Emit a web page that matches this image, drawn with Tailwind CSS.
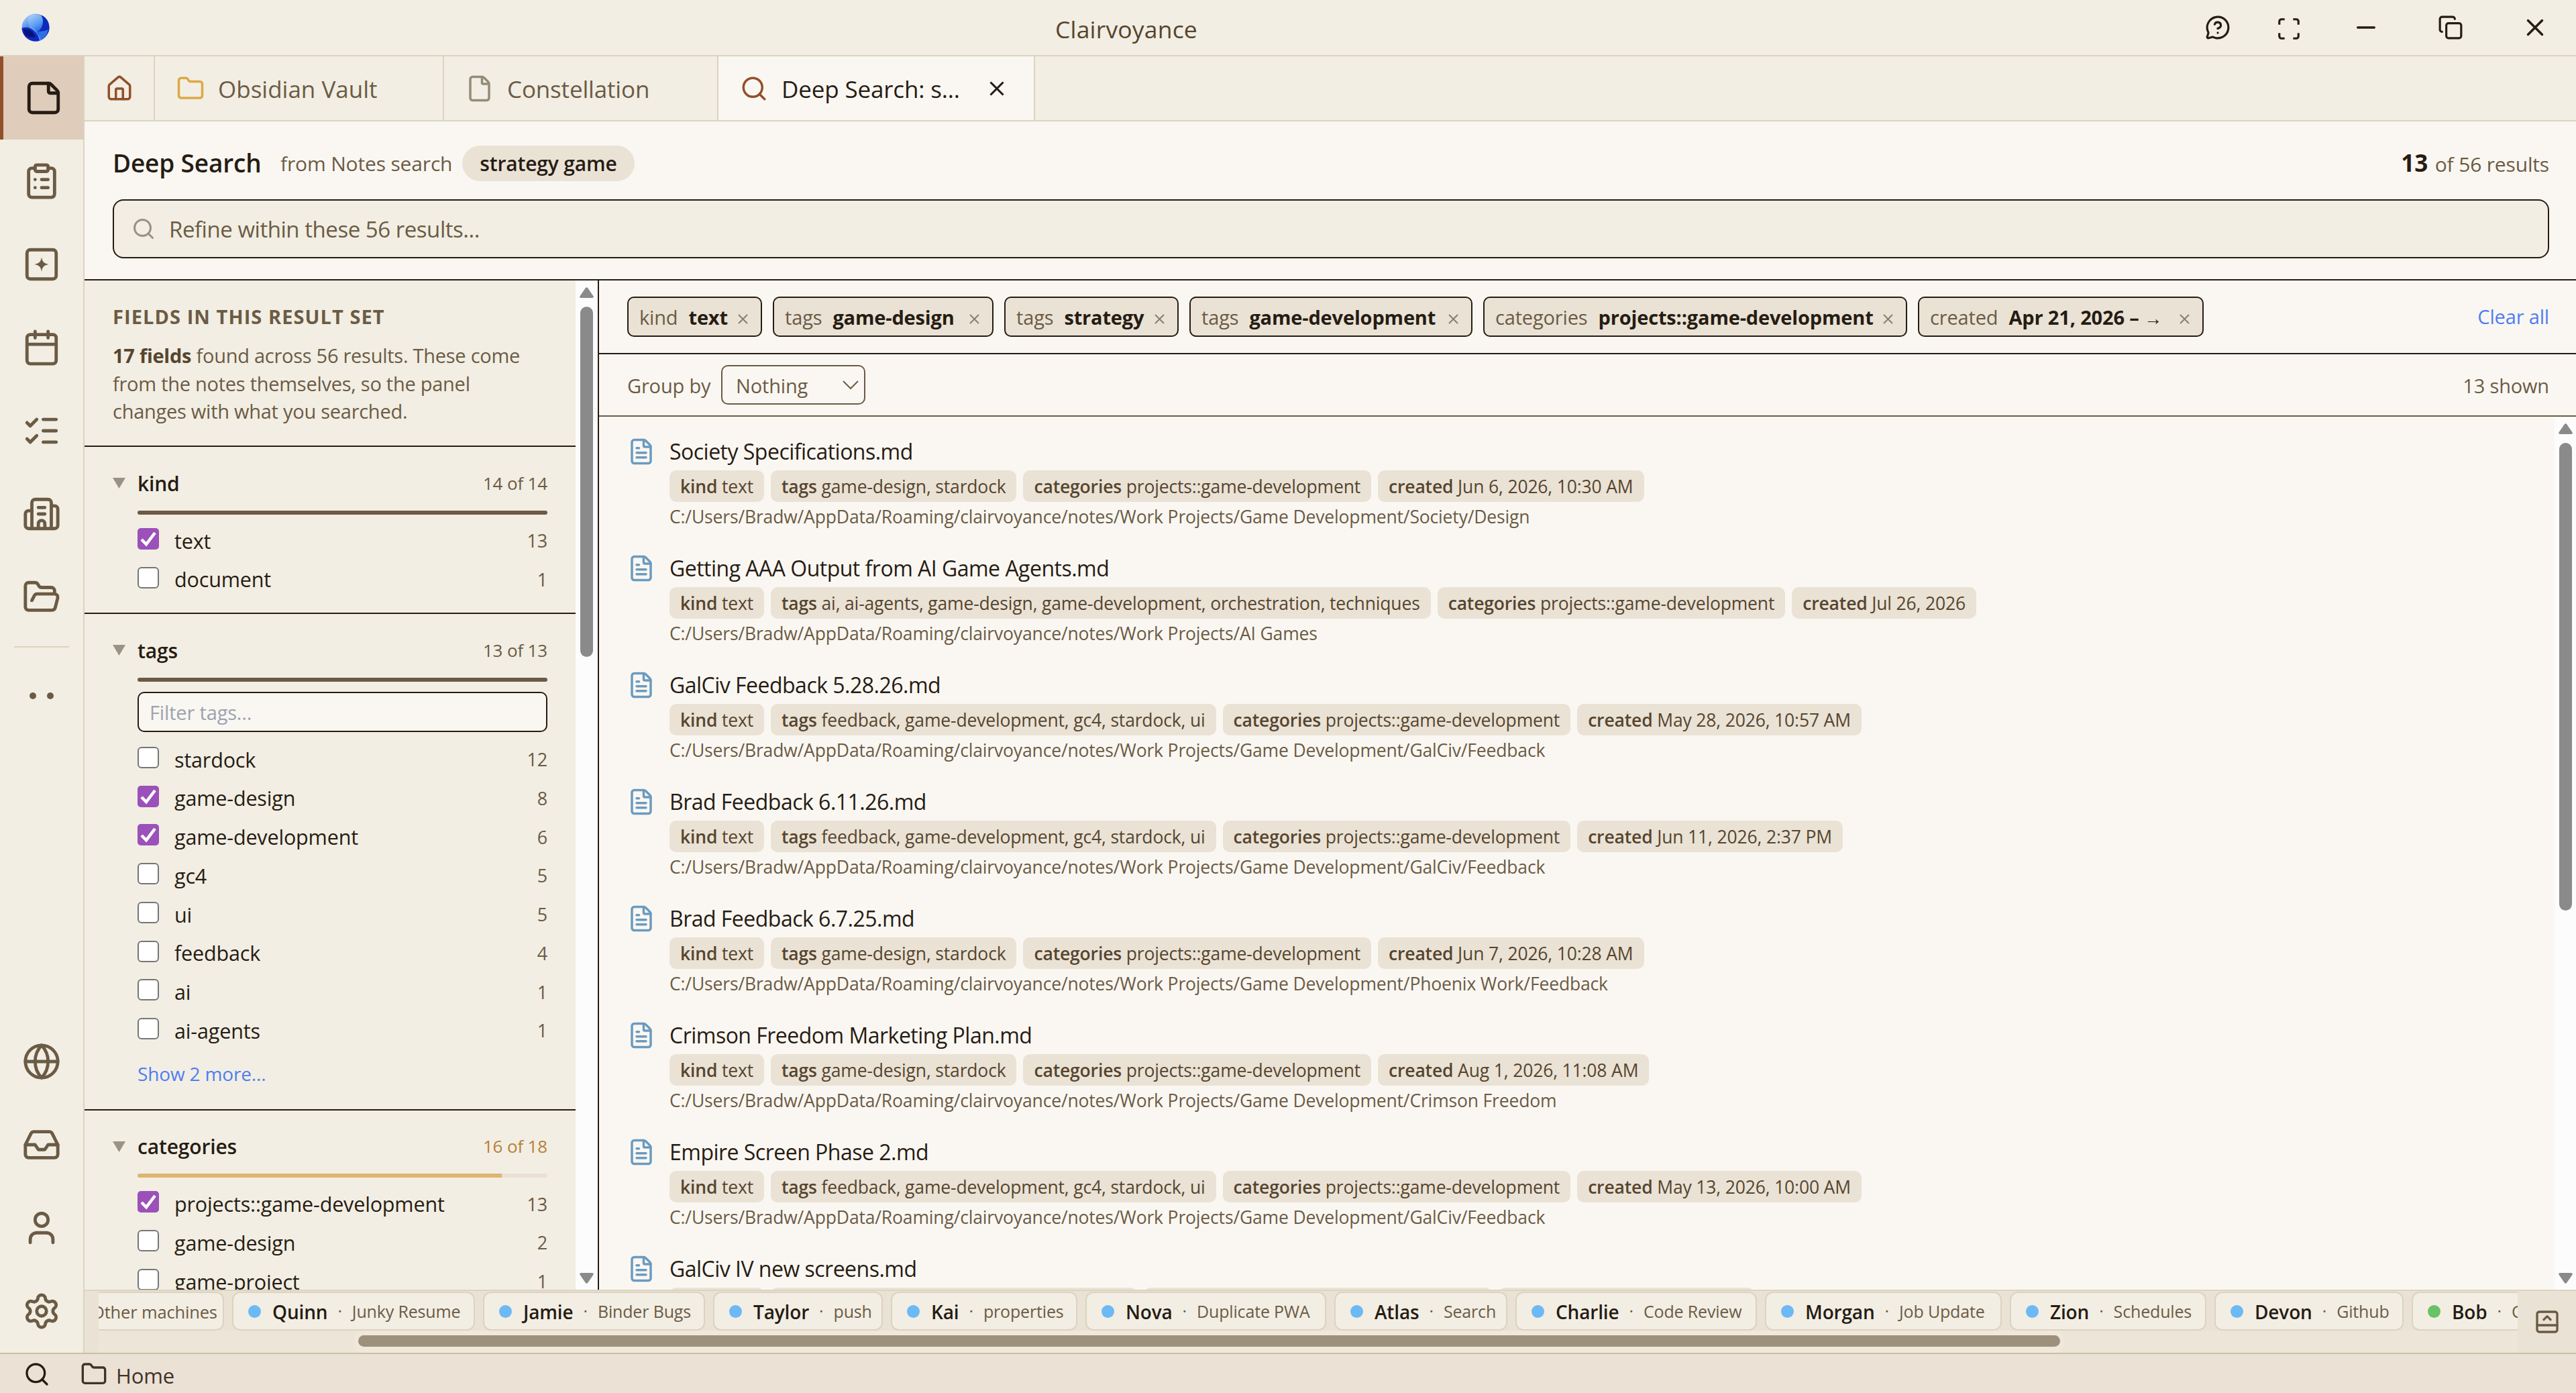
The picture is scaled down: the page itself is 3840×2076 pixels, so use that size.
<!DOCTYPE html>
<html lang="en">
<head>
    <meta charset="UTF-8">
    <meta name="viewport" content="width=device-width, initial-scale=1.0">
    <title>Clairvoyance</title>
    <script src="https://cdn.jsdelivr.net/npm/@tailwindcss/browser@4"></script>
</head>
<body class="w-[3840px] h-[2076px] overflow-hidden flex flex-col bg-[#faf7f2] text-[#261c14] font-['Open_Sans','Noto_Sans',sans-serif] tracking-[-0.01em]">

    <!-- Icon sprite -->
    <svg class="hidden">
        <symbol id="i-note" viewBox="0 0 24 24"><path d="M21 9a2.4 2.4 0 0 0-.706-1.706l-3.588-3.588A2.4 2.4 0 0 0 15 3H5a2 2 0 0 0-2 2v14a2 2 0 0 0 2 2h14a2 2 0 0 0 2-2z"/><path d="M15 3v5a1 1 0 0 0 1 1h5"/></symbol>
        <symbol id="i-clipboard" viewBox="0 0 24 24"><rect width="8" height="4" x="8" y="2" rx="1"/><path d="M16 4h2a2 2 0 0 1 2 2v14a2 2 0 0 1-2 2H6a2 2 0 0 1-2-2V6a2 2 0 0 1 2-2h2"/><path d="M12 11h4M12 16h4M8 11h.01M8 16h.01"/></symbol>
        <symbol id="i-sparkle" viewBox="0 0 24 24"><rect x="3" y="3" width="18" height="18" rx="2"/><path fill="currentColor" stroke="none" d="M12 7.600c.5 2.900 1.500 3.900 4.400 4.400-2.900.5-3.900 1.500-4.400 4.400-.5-2.900-1.500-3.900-4.400-4.400 2.900-.5 3.900-1.500 4.400-4.400z"/></symbol>
        <symbol id="i-calendar" viewBox="0 0 24 24"><path d="M8 2v4M16 2v4M3 10h18"/><rect width="18" height="18" x="3" y="4" rx="2"/></symbol>
        <symbol id="i-checks" viewBox="0 0 24 24"><path d="M13 5h8M13 12h8M13 19h8M3 17l2 2 4-4M3 7l2 2 4-4"/></symbol>
        <symbol id="i-building" viewBox="0 0 24 24"><path d="M10 12h4M10 8h4M14 21v-3a2 2 0 0 0-4 0v3"/><path d="M6 10H4a2 2 0 0 0-2 2v7a2 2 0 0 0 2 2h16a2 2 0 0 0 2-2V9a2 2 0 0 0-2-2h-2"/><path d="M6 21V5a2 2 0 0 1 2-2h8a2 2 0 0 1 2 2v16"/></symbol>
        <symbol id="i-folder-open" viewBox="0 0 24 24"><path d="m6 14 1.500-2.900A2 2 0 0 1 9.240 10H20a2 2 0 0 1 1.940 2.500l-1.540 6a2 2 0 0 1-1.950 1.500H4a2 2 0 0 1-2-2V5a2 2 0 0 1 2-2h3.900a2 2 0 0 1 1.690.9l.81 1.200a2 2 0 0 0 1.670.9H18a2 2 0 0 1 2 2v2"/></symbol>
        <symbol id="i-globe" viewBox="0 0 24 24"><circle cx="12" cy="12" r="10"/><path d="M12 2a14.500 14.500 0 0 0 0 20 14.500 14.500 0 0 0 0-20M2 12h20"/></symbol>
        <symbol id="i-inbox" viewBox="0 0 24 24"><path d="M22 12h-6l-2 3h-4l-2-3H2"/><path d="M5.450 5.110 2 12v6a2 2 0 0 0 2 2h16a2 2 0 0 0 2-2v-6l-3.450-6.890A2 2 0 0 0 16.760 4H7.240a2 2 0 0 0-1.790 1.110z"/></symbol>
        <symbol id="i-user" viewBox="0 0 24 24"><path d="M19 21v-2a4 4 0 0 0-4-4H9a4 4 0 0 0-4 4v2"/><circle cx="12" cy="7" r="4"/></symbol>
        <symbol id="i-settings" viewBox="0 0 24 24"><path d="M9.671 4.136a2.340 2.340 0 0 1 4.659 0 2.340 2.340 0 0 0 3.319 1.915 2.340 2.340 0 0 1 2.330 4.033 2.340 2.340 0 0 0 0 3.831 2.340 2.340 0 0 1-2.330 4.033 2.340 2.340 0 0 0-3.319 1.915 2.340 2.340 0 0 1-4.659 0 2.340 2.340 0 0 0-3.320-1.915 2.340 2.340 0 0 1-2.330-4.033 2.340 2.340 0 0 0 0-3.831A2.340 2.340 0 0 1 6.350 6.051a2.340 2.340 0 0 0 3.319-1.915"/><circle cx="12" cy="12" r="3"/></symbol>
        <symbol id="i-home" viewBox="0 0 24 24"><path d="M15 21v-8a1 1 0 0 0-1-1h-4a1 1 0 0 0-1 1v8"/><path d="M3 10a2 2 0 0 1 .709-1.528l7-6a2 2 0 0 1 2.582 0l7 6A2 2 0 0 1 21 10v9a2 2 0 0 1-2 2H5a2 2 0 0 1-2-2z"/></symbol>
        <symbol id="i-folder" viewBox="0 0 24 24"><path d="M20 20a2 2 0 0 0 2-2V8a2 2 0 0 0-2-2h-7.900a2 2 0 0 1-1.690-.9L9.600 3.900A2 2 0 0 0 7.930 3H4a2 2 0 0 0-2 2v13a2 2 0 0 0 2 2Z"/></symbol>
        <symbol id="i-file" viewBox="0 0 24 24"><path d="M6 22a2 2 0 0 1-2-2V4a2 2 0 0 1 2-2h8a2.400 2.400 0 0 1 1.704.706l3.588 3.588A2.400 2.400 0 0 1 20 8v12a2 2 0 0 1-2 2z"/><path d="M14 2v5a1 1 0 0 0 1 1h5"/></symbol>
        <symbol id="i-file-text" viewBox="0 0 24 24"><path d="M6 22a2 2 0 0 1-2-2V4a2 2 0 0 1 2-2h8a2.400 2.400 0 0 1 1.704.706l3.588 3.588A2.400 2.400 0 0 1 20 8v12a2 2 0 0 1-2 2z"/><path d="M14 2v5a1 1 0 0 0 1 1h5M10 9H8M16 13H8M16 17H8"/></symbol>
        <symbol id="i-search" viewBox="0 0 24 24"><path d="m21 21-4.340-4.340"/><circle cx="11" cy="11" r="8"/></symbol>
        <symbol id="i-x" viewBox="0 0 24 24"><path d="M18 6 6 18M6 6l12 12"/></symbol>
        <symbol id="i-help" viewBox="0 0 24 24"><path d="M2.992 16.342a2 2 0 0 1 .094 1.167l-1.065 3.290a1 1 0 0 0 1.236 1.168l3.413-.998a2 2 0 0 1 1.099.092 10 10 0 1 0-4.777-4.719"/><path d="M9.090 9a3 3 0 0 1 5.830 1c0 2-3 3-3 3M12 17h.01"/></symbol>
        <symbol id="i-maximize" viewBox="0 0 24 24"><path d="M8 3H5a2 2 0 0 0-2 2v3M21 8V5a2 2 0 0 0-2-2h-3M3 16v3a2 2 0 0 0 2 2h3M16 21h3a2 2 0 0 0 2-2v-3"/></symbol>
        <symbol id="i-minus" viewBox="0 0 24 24"><path d="M5 12h14"/></symbol>
        <symbol id="i-copy" viewBox="0 0 24 24"><rect width="14" height="14" x="8" y="8" rx="2"/><path d="M4 16c-1.100 0-2-.9-2-2V4c0-1.100.9-2 2-2h10c1.100 0 2 .9 2 2"/></symbol>
        <symbol id="i-panel" viewBox="0 0 24 24"><rect width="18" height="18" x="3" y="3" rx="2"/><path d="M3 15h18M9 10l3-3 3 3"/></symbol>
        <symbol id="i-up" viewBox="0 0 21 16"><path fill="currentColor" stroke="none" d="M8.800 1.200q1.700-2 3.400 0l8.300 12q1 2.600-1.500 2.800H2q-2.500-.2-1.500-2.800z"/></symbol>
        <symbol id="i-down" viewBox="0 0 21 16"><path fill="currentColor" stroke="none" d="M8.800 14.800q1.700 2 3.400 0l8.300-12q1-2.600-1.500-2.800H2q-2.500.2-1.500 2.800z"/></symbol>
        <symbol id="i-tri" viewBox="0 0 19 16"><path fill="currentColor" stroke="none" d="M0 0h19l-9.500 16z"/></symbol>
    </svg>

    <!-- Title bar -->
    <header class="h-[84px] shrink-0 flex items-center bg-[#f2eee3] border-b-2 border-[#dcd3c0] relative">
        <svg class="size-[42px] ml-8" viewBox="0 0 42 42">
            <defs>
                <linearGradient id="orb" x1="0.1" y1="0" x2="0.8" y2="1"><stop offset="0" stop-color="#c4def8"/><stop offset="0.35" stop-color="#5a93e8"/><stop offset="0.7" stop-color="#1540c8"/><stop offset="1" stop-color="#1d4fd8"/></linearGradient>
                <linearGradient id="drop" x1="0.2" y1="0" x2="0.7" y2="1"><stop offset="0" stop-color="#a9cdf6"/><stop offset="0.6" stop-color="#5c9df2"/><stop offset="1" stop-color="#2b66e0"/></linearGradient>
                <clipPath id="ball"><circle cx="21" cy="21" r="20.500"/></clipPath>
            </defs>
            <g clip-path="url(#ball)">
                <rect width="42" height="42" fill="url(#orb)"/>
                <path d="M30 2q12 6 12 20T26 27q8-12 4-25z" fill="#0b2cba"/>
                <path d="M0 22q12-4 20 6t6 16H4Q0 34 0 22z" fill="#0f28c0"/>
                <path d="M3 24q9-2 15 6l3 5q-10 2-16-3z" fill="#050a5c" opacity=".7"/>
                <path d="M14 2q18-2 18 9t-8 16q-14-4-14-15 0-7 4-10z" fill="url(#drop)"/>
                <path d="M24 27q10 0 16-3-3 13-13 17 1-8-3-14z" fill="#2c6fe6"/>
                <path d="M12 20q13 6 16 20" stroke="#6db4ff" stroke-width="1.500" fill="none" opacity=".7"/>
            </g>
        </svg>
        <div class="absolute inset-x-0 text-center pr-[482px] text-[35.5px] font-medium tracking-[0.005em] text-[#56452f] leading-[86px] top-0">Clairvoyance</div>
        <div class="absolute right-0 top-0 h-[82px] w-[600px] text-[#261c14]">
            <svg class="absolute left-[47px] top-[22px] size-[38px] fill-none stroke-current stroke-2 [stroke-linecap:round] [stroke-linejoin:round]"><use href="#i-help"/></svg>
            <svg class="absolute left-[153px] top-[24px] size-[38px] fill-none stroke-current stroke-2 [stroke-linejoin:round]"><use href="#i-maximize"/></svg>
            <svg class="absolute left-[266px] top-[20px] size-[42px] fill-none stroke-current stroke-2 [stroke-linecap:round]"><use href="#i-minus"/></svg>
            <svg class="absolute left-[394px] top-[22px] size-[38px] fill-none stroke-current stroke-2 [stroke-linecap:round] [stroke-linejoin:round]"><use href="#i-copy"/></svg>
            <svg class="absolute left-[518px] top-[20px] size-[42px] fill-none stroke-current stroke-2 [stroke-linecap:round]"><use href="#i-x"/></svg>
        </div>
    </header>

    <div class="flex flex-1 min-h-0">
        <!-- Activity rail -->
        <nav class="w-[126px] shrink-0 border-r-2 border-[#dcd3c0] bg-[#f2eee3] flex flex-col items-center text-[#6b5b45]">
            <div class="w-full h-[124px] border-l-[5px] border-[#91502a] bg-[#dfccbb] text-[#261c14] flex items-center justify-center shrink-0"><svg class="size-[58px] fill-none stroke-current stroke-2 [stroke-linecap:round] [stroke-linejoin:round]"><use href="#i-note"/></svg></div>
            <div class="h-[124px] flex items-center shrink-0"><svg class="size-[58px] fill-none stroke-current stroke-2 [stroke-linecap:round] [stroke-linejoin:round]"><use href="#i-clipboard"/></svg></div>
            <div class="h-[124px] flex items-center shrink-0"><svg class="size-[58px] fill-none stroke-current stroke-2 [stroke-linecap:round] [stroke-linejoin:round]"><use href="#i-sparkle"/></svg></div>
            <div class="h-[124px] flex items-center shrink-0"><svg class="size-[58px] fill-none stroke-current stroke-2 [stroke-linecap:round] [stroke-linejoin:round]"><use href="#i-calendar"/></svg></div>
            <div class="h-[124px] flex items-center shrink-0"><svg class="size-[58px] fill-none stroke-current stroke-2 [stroke-linecap:round] [stroke-linejoin:round]"><use href="#i-checks"/></svg></div>
            <div class="h-[124px] flex items-center shrink-0"><svg class="size-[58px] fill-none stroke-current stroke-2 [stroke-linecap:round] [stroke-linejoin:round]"><use href="#i-building"/></svg></div>
            <div class="h-[124px] flex items-center shrink-0"><svg class="size-[58px] fill-none stroke-current stroke-2 [stroke-linecap:round] [stroke-linejoin:round]"><use href="#i-folder-open"/></svg></div>
            <div class="w-[82px] h-0.5 mt-[11px] bg-[#dcd3c0] shrink-0"></div>
            <div class="mt-[67px] flex gap-4 shrink-0"><i class="size-2.5 rounded-full bg-current"></i><i class="size-2.5 rounded-full bg-current"></i></div>
            <div class="mt-auto h-[124px] flex items-center shrink-0"><svg class="size-[58px] fill-none stroke-current stroke-2 [stroke-linecap:round] [stroke-linejoin:round]"><use href="#i-globe"/></svg></div>
            <div class="h-[124px] flex items-center shrink-0"><svg class="size-[58px] fill-none stroke-current stroke-2 [stroke-linecap:round] [stroke-linejoin:round]"><use href="#i-inbox"/></svg></div>
            <div class="h-[124px] flex items-center shrink-0"><svg class="size-[58px] fill-none stroke-current stroke-2 [stroke-linecap:round] [stroke-linejoin:round]"><use href="#i-user"/></svg></div>
            <div class="h-[124px] flex items-center shrink-0"><svg class="size-[58px] fill-none stroke-current stroke-2 [stroke-linecap:round] [stroke-linejoin:round]"><use href="#i-settings"/></svg></div>
        </nav>

        <main class="flex-1 min-w-0 flex flex-col">
            <!-- Tabs -->
            <div class="h-[97px] shrink-0 flex bg-[#f2eee3] border-b-2 border-[#dcd3c0] text-[35px] text-[#6b5b45] whitespace-nowrap">
                <div class="w-[105px] border-r-2 border-[#dcd3c0] flex items-center justify-center text-[#91502a]"><svg class="size-[42px] fill-none stroke-current stroke-2 [stroke-linecap:round] [stroke-linejoin:round]"><use href="#i-home"/></svg></div>
                <div class="w-[431px] border-r-2 border-[#dcd3c0] flex items-center pl-8">
                    <svg class="size-[42px] mr-5 text-[#dda944] fill-none stroke-current stroke-2 [stroke-linejoin:round]"><use href="#i-folder"/></svg><span class="mt-[3px] tracking-normal">Obsidian Vault</span>
                </div>
                <div class="w-[409px] border-r-2 border-[#dcd3c0] flex items-center pl-8">
                    <svg class="size-[42px] mr-5 text-[#958b79] fill-none stroke-current stroke-2 [stroke-linejoin:round]"><use href="#i-file"/></svg><span class="mt-[3px]">Constellation</span>
                </div>
                <div class="w-[472px] border-r-2 border-[#dcd3c0] bg-[#faf7f2] text-[#261c14] flex items-center pl-8">
                    <svg class="size-[42px] mr-5 text-[#91502a] fill-none stroke-current stroke-2 [stroke-linecap:round]"><use href="#i-search"/></svg><span class="mt-[3px] w-[264px]">Deep Search: s...</span>
                    <svg class="size-[38px] ml-[38px] fill-none stroke-current stroke-2"><use href="#i-x"/></svg>
                </div>
            </div>

            <!-- Search header -->
            <div class="h-[237px] shrink-0 border-b-2 border-[#261c14] px-[42px] pr-10 pt-[32px]">
                <div class="h-[60px] flex items-center">
                    <span class="text-[37px] font-semibold w-[250px]">Deep Search</span>
                    <span class="text-[30px] text-[#6b5b45] w-[271px]">from Notes search</span>
                    <span class="w-[257px] h-[53px] rounded-full bg-[#eae2d5] text-center text-[30px] leading-[54px] font-semibold">strategy game</span>
                    <span class="ml-auto text-[30px] text-[#6b5b45]"><b class="text-[35px] text-[#261c14] mr-[3px]">13</b> of 56 results</span>
                </div>
                <div class="mt-[24px] h-[88px] border-2 border-[#261c14] rounded-2xl bg-[#f2eee3] flex items-center pl-[26px] text-[33px] tracking-[-0.014em] text-[#6b5b45]">
                    <svg class="size-[36px] mr-[20px] text-[#9a9284] fill-none stroke-current stroke-2 [stroke-linecap:round]"><use href="#i-search"/></svg>
                    <span class="mt-0.5">Refine within these 56 results...</span>
                </div>
            </div>

            <div class="flex-1 min-h-0 flex">
                <!-- Facets -->
                <aside class="w-[767px] shrink-0 border-r-2 border-[#261c14] bg-[#f2eee3] flex">
                    <div class="w-[732px] shrink-0 overflow-hidden">
                        <div class="h-[248px] border-b-2 border-[#261c14] pl-[42px] pt-[34px] text-[29px] text-[#6b5b45]">
                            <div class="font-bold leading-10 tracking-[0.037em]">FIELDS IN THIS RESULT SET</div>
                            <div class="mt-[17px] leading-[41.6px] whitespace-nowrap tracking-[-0.009em]"><b class="text-[#56452f]">17 fields</b> found across 56 results. These come<br>from the notes themselves, so the panel<br>changes with what you searched.</div>
                        </div>
                        <div id="facets"></div>
                    </div>
                    <div class="w-[33px] bg-[#fcfcfc] text-[#8a8a8a] flex flex-col items-center pt-[10px] pb-[9px]">
                        <svg class="w-[21px] h-4"><use href="#i-up"/></svg>
                        <div class="w-[19px] h-[522px] mt-[13px] rounded-full bg-[#8a8a8a]"></div>
                        <svg class="w-[21px] h-4 mt-auto"><use href="#i-down"/></svg>
                    </div>
                </aside>

                <!-- Results -->
                <section class="flex-1 min-w-0 flex flex-col">
                    <div class="h-[110px] shrink-0 border-b-2 border-[#261c14] flex items-center pl-[42px] pr-10">
                        <div id="filters" class="flex gap-4"></div>
                        <span class="ml-auto text-[29px] text-[#4f7df3]">Clear all</span>
                    </div>
                    <div class="h-[93px] shrink-0 border-b-2 border-[#6b5b45] flex items-center pl-[42px] pr-10 text-[29px] text-[#6b5b45]">
                        <span class="w-[140px] mt-0.5">Group by</span>
                        <div class="w-[215px] h-[59px] border-2 border-[#6b5b45] rounded-[10px] flex items-center pl-5 pr-2 justify-between"><span class="mt-0.5">Nothing</span>
                            <svg class="w-6 h-[14px] fill-none stroke-current stroke-2" viewBox="0 0 24 14"><path d="M1 1l11 11L23 1"/></svg></div>
                        <span class="ml-auto mt-0.5">13 shown</span>
                    </div>
                    <div class="flex-1 min-h-0 flex">
                        <div id="results" class="flex-1 min-w-0 overflow-hidden pl-[42px] pt-[24px]"></div>
                        <div class="w-[32px] bg-[#fcfcfc] text-[#8a8a8a] flex flex-col items-center pt-[10px] pb-[9px]">
                            <svg class="w-[21px] h-4"><use href="#i-up"/></svg>
                            <div class="w-[19px] h-[697px] mt-[13px] rounded-full bg-[#8a8a8a]"></div>
                            <svg class="w-[21px] h-4 mt-auto"><use href="#i-down"/></svg>
                        </div>
                    </div>
                </section>
            </div>

            <!-- Agent strip -->
            <div class="h-[94px] shrink-0 border-t-2 border-[#dcd3c0] bg-[#eae2d5] flex">
                <div class="ml-[21px] w-[3606px] overflow-hidden">
                    <div id="agents" class="flex gap-3 pt-px w-max ml-[-40px]"></div>
                    <div class="h-[33px] bg-[#ede5d8] flex items-start pl-[380px]">
                        <div class="w-[2551px] h-[33px] rounded-2xl bg-[#f0e8da] px-[7px] pt-[7px]"><div class="h-[17px] rounded-full bg-[#9d907d]"></div></div>
                    </div>
                </div>
                <div class="flex-1 flex items-center justify-center text-[#6b5b45]"><svg class="size-[40px] ml-px fill-none stroke-current stroke-2 [stroke-linecap:round] [stroke-linejoin:round]"><use href="#i-panel"/></svg></div>
            </div>
        </main>
    </div>

    <!-- Status bar -->
    <footer class="h-[60px] shrink-0 border-t-2 border-[#ccbfa5] bg-[#ebe1d5] flex items-center pl-[35px] text-[31px] text-[#403327]">
        <svg class="size-[40px] mt-0.5 text-[#261c14] fill-none stroke-current stroke-2 [stroke-linecap:round]"><use href="#i-search"/></svg>
        <svg class="size-[40px] ml-[45px] mr-[13px] mt-0.5 fill-none stroke-current stroke-2 [stroke-linejoin:round]"><use href="#i-folder"/></svg>
        <span class="mt-1.5">Home</span>
    </footer>

    <script>
        const facets = [
            { name: 'kind', found: 14, total: 14, rows: [['text', 13, 1], ['document', 1]] },
            { name: 'tags', found: 13, total: 13, filter: true, more: 'Show 2 more...', rows: [['stardock', 12], ['game-design', 8, 1], ['game-development', 6, 1], ['gc4', 5], ['ui', 5], ['feedback', 4], ['ai', 1], ['ai-agents', 1]] },
            { name: 'categories', found: 16, total: 18, rows: [['projects::game-development', 13, 1], ['game-design', 2], ['game-project', 1]] }
        ];
        const check = on => on
            ? '<svg class="size-8 shrink-0" viewBox="0 0 32 32"><rect width="32" height="32" rx="5" fill="#9b51b9"/><path d="M6 17l7 7L26 7" fill="none" stroke="#fff" stroke-width="4.500"/></svg>'
            : '<span class="size-8 shrink-0 rounded-[6px] border-2 border-[#767676] bg-white"></span>';

        document.getElementById('facets').innerHTML = facets.map(f => `
            <div class="border-b-2 border-[#261c14] px-[42px] pt-8 pb-[21.5px]">
                <div class="flex items-center h-[44px]">
                    <svg class="w-[19px] h-4 mr-[18px] text-[#9a9284]"><use href="#i-tri"/></svg>
                    <span class="text-[30px] font-semibold">${f.name}</span>
                    <span class="ml-auto text-[26px] ${f.found < f.total ? 'text-[#b8803a]' : 'text-[#6b5b45]'}">${f.found} of ${f.total}</span>
                </div>
                <div class="ml-[37px] mt-[18.5px] h-[6px] rounded-full overflow-hidden bg-[#eae0d4]"><div class="h-full ${f.found < f.total ? 'bg-[#ddb571]' : 'bg-[#6b5b45]'}" style="width:${f.found / f.total * 100}%"></div></div>
                ${f.filter ? '<div class="ml-[37px] mt-[15px] h-[60px] border-2 border-[#261c14] rounded-[10px] bg-[#faf7f2] pl-4 text-[29px] leading-[58px] text-[#9ca3af]">Filter tags...</div>' : ''}
                <div class="ml-[37px] ${f.filter ? 'mt-[11.5px]' : 'mt-[9.5px]'}">
                    ${f.rows.map(r => `<div class="h-[57.75px] flex items-center text-[30.5px]"><span class="flex -mt-1">${check(r[2])}</span><span class="ml-[23px] mt-[3px]">${r[0]}</span><span class="ml-auto mt-[3px] text-[27px] text-[#6b5b45]">${r[1]}</span></div>`).join('')}
                </div>
                ${f.more ? `<div class="ml-[37px] mt-[15px] h-[52px] text-[28px] leading-[42px] text-[#4f7df3]">${f.more}</div>` : ''}
            </div>`).join('');

        const arrow = '<span class="font-[\'DejaVu_Sans\'] text-[27px] font-normal">→</span>';
        const filters = [['kind', 'text', 201], ['tags', 'game-design', 329], ['tags', 'strategy', 260], ['tags', 'game-development', 422], ['categories', 'projects::game-development', 632], ['created', 'Apr 21, 2026 – ' + arrow, 426]];
        document.getElementById('filters').innerHTML = filters.map(f => `
            <div class="h-[60px] border-2 border-[#261c14] rounded-[10px] bg-[#eae2d5] flex items-center pl-4 pr-[19px] text-[29px] leading-10 whitespace-nowrap" style="width:${f[2]}px">
                <span class="mt-0.5 text-[#6b5b45]">${f[0]}</span><b class="mt-0.5 ml-4">${f[1]}</b>
                <svg class="size-[15px] ml-auto mt-1.5 stroke-[#8a7f6e] stroke-2" viewBox="0 0 15 15"><path d="M1 1l13 13M14 1L1 14"/></svg>
            </div>`).join('');

        const cat = 'projects::game-development';
        const root = 'C:/Users/Bradw/AppData/Roaming/clairvoyance/notes/Work Projects/';
        const fb = 'feedback, game-development, gc4, stardock, ui';
        const results = [
            ['Society Specifications.md', 'game-design, stardock', 'Jun 6, 2026, 10:30 AM', 'Game Development/Society/Design'],
            ['Getting AAA Output from AI Game Agents.md', 'ai, ai-agents, game-design, game-development, orchestration, techniques', 'Jul 26, 2026', 'AI Games'],
            ['GalCiv Feedback 5.28.26.md', fb, 'May 28, 2026, 10:57 AM', 'Game Development/GalCiv/Feedback'],
            ['Brad Feedback 6.11.26.md', fb, 'Jun 11, 2026, 2:37 PM', 'Game Development/GalCiv/Feedback'],
            ['Brad Feedback 6.7.25.md', 'game-design, stardock', 'Jun 7, 2026, 10:28 AM', 'Game Development/Phoenix Work/Feedback'],
            ['Crimson Freedom Marketing Plan.md', 'game-design, stardock', 'Aug 1, 2026, 11:08 AM', 'Game Development/Crimson Freedom'],
            ['Empire Screen Phase 2.md', fb, 'May 13, 2026, 10:00 AM', 'Game Development/GalCiv/Feedback'],
            ['GalCiv IV new screens.md', 'feedback, game-design, gc4, stardock', 'Jun 7, 2026, 2:28 PM', '']
        ];
        const chip = (k, v) => `<span class="h-[47px] px-4 rounded-[10px] bg-[#eae2d5] leading-[48px]"><span class="font-semibold">${k}</span> ${v}</span>`;
        document.getElementById('results').innerHTML = results.map(r => `
            <div class="h-[174px] flex">
                <svg class="size-[42px] mt-[7px] mr-[21px] shrink-0 text-[#6b9bc0] fill-none stroke-current stroke-2 [stroke-linecap:round] [stroke-linejoin:round]"><use href="#i-file-text"/></svg>
                <div class="whitespace-nowrap">
                    <div class="h-[56px] text-[32px] leading-[56px] tracking-[-0.016em]">${r[0]}</div>
                    <div class="flex gap-[10px] text-[26.5px] text-[#56452f]">${chip('kind', 'text')}${chip('tags', r[1])}${chip('categories', cat)}${chip('created', r[2])}</div>
                    ${r[3] ? `<div class="text-[26.5px] leading-[42px] mt-px text-[#6b5b45]">${root}${r[3]}</div>` : ''}
                </div>
            </div>`).join('');

        const agents = [['Quinn', 'Junky Resume', 362], ['Jamie', 'Binder Bugs', 331], ['Taylor', 'push', 253], ['Kai', 'properties', 278], ['Nova', 'Duplicate PWA', 359], ['Atlas', 'Search', 258], ['Charlie', 'Code Review', 360], ['Morgan', 'Job Update', 353], ['Zion', 'Schedules', 293], ['Devon', 'Github', 282], ['Bob', 'Cleanup', 283]];
        document.getElementById('agents').innerHTML =
            '<div class="w-[227px] h-[58px] border-2 border-[#dcd3c0] rounded-xl bg-[#f2eee3] text-[25.5px] leading-[56px] pl-[27px] whitespace-nowrap text-[#6b5b45]">Other machines</div>' +
            agents.map(a => `
            <div class="h-[58px] border-2 border-[#dcd3c0] rounded-xl bg-[#f2eee3] flex items-center pl-[22px] whitespace-nowrap text-[25px] text-[#6b5b45]" style="width:${a[2]}px">
                <i class="size-[19px] rounded-full mr-[17px] ${a[0] === 'Bob' ? 'bg-[#68c266]' : 'bg-[#6cb9f5]'}"></i>
                <span class="mt-0.5 text-[28px] font-semibold text-[#261c14]">${a[0]}</span><span class="mx-[15px]">·</span><span class="mt-0.5">${a[1]}</span>
            </div>`).join('');
    </script>
</body>
</html>
